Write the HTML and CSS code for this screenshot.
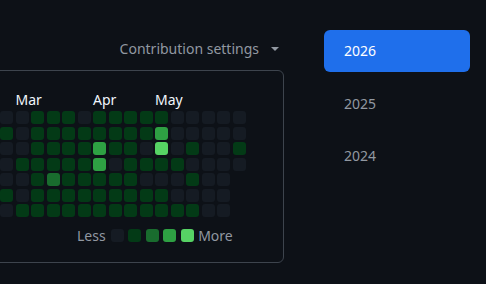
FILE: index.html
```html
<!DOCTYPE html>
<html lang="en">

<head>
  <meta charset="UTF-8">
  <title>Contributions</title>
  <link rel="stylesheet" href="styles.css">
</head>

<body>
  <div id="page">
    <div id="activity">
      <div class="settings">
        <span>Contribution settings</span>
        <span class="caret"></span>
      </div>
      <div id="calendar">
        <div class="months">
          <span style="grid-column: 2">Mar</span>
          <span style="grid-column: 7">Apr</span>
          <span style="grid-column: 11">May</span>
        </div>
        <div class="days" id="days"></div>
        <div class="legend">
          <span>Less</span>
          <span class="day l0"></span>
          <span class="day l1"></span>
          <span class="day l2"></span>
          <span class="day l3"></span>
          <span class="day l4"></span>
          <span>More</span>
        </div>
      </div>
    </div>
    <ul id="years">
      <li class="selected">2026</li>
      <li>2025</li>
      <li>2024</li>
    </ul>
  </div>
  <script>
    // one string per weekday, one char per week; "." = no cell yet
    const weeks = [
      "0011101111100000",
      "1011111111300000",
      "0011113110401001",
      "0111113011110000",
      "001211111000100.",
      "101111111110000.",
      "011111111111100.",
    ];
    const days = document.getElementById("days");
    weeks.forEach((row, r) => {
      row.split("").forEach((lvl, c) => {
        if (lvl === ".") return;
        const d = document.createElement("span");
        d.className = "day l" + lvl;
        d.style.gridRow = r + 1;
        d.style.gridColumn = c + 1;
        days.appendChild(d);
      });
    });
  </script>
</body>

</html>
```

FILE: styles.css
```css
body {
  --background: #0d1117;
  --border: #3d444d;
  --muted: #9198a1;
  --foreground: #f0f6fc;
  --accent: #1f6feb;

  --level0: #151b23;
  --level1: #033a16;
  --level2: #196c2e;
  --level3: #2ea043;
  --level4: #56d364;

  margin: 0;
  overflow: hidden;
  background-color: var(--background);
  color: var(--foreground);
  font-family: "Noto Sans", "Liberation Sans", sans-serif;
  font-size: 14px;
}

#page {
  display: flex;
  gap: 40px;
  margin-left: -17px;
}

#activity {
  width: 301px;
  padding-top: 39px;
}

.settings {
  display: flex;
  justify-content: flex-end;
  align-items: center;
  gap: 12px;
  height: 20px;
  line-height: 20px;
  padding-right: 5px;
  margin-bottom: 11px;
  color: var(--muted);
}

.caret {
  width: 0;
  height: 0;
  border-left: 4px solid transparent;
  border-right: 4px solid transparent;
  border-top: 4px solid var(--muted);
}

#calendar {
  border: 1px solid var(--border);
  border-radius: 6px;
  padding: 19px 0 16px 16px;
}

.months,
.days {
  display: grid;
  grid-template-columns: repeat(16, 13px);
  column-gap: 2.5px;
}

.months {
  height: 20px;
  line-height: 20px;
  margin-bottom: 1px;
}

.months span {
  white-space: nowrap;
}

.days {
  grid-template-rows: repeat(7, 13px);
  row-gap: 2.5px;
}

.day {
  display: block;
  width: 13px;
  height: 13px;
  border-radius: 3px;
}

.l0 { background-color: var(--level0); }
.l1 { background-color: var(--level1); }
.l2 { background-color: var(--level2); }
.l3 { background-color: var(--level3); }
.l4 { background-color: var(--level4); }

.legend {
  display: flex;
  align-items: center;
  gap: 4.5px;
  height: 20px;
  margin-top: 8.5px;
  padding-left: 77px;
  color: var(--muted);
}

.legend span:first-child {
  margin-right: 0.5px;
}

#years {
  list-style: none;
  margin: 30px 0 0;
  padding: 0;
  display: flex;
  flex-direction: column;
  gap: 10.5px;
  width: 146px;
}

#years li {
  height: 42px;
  line-height: 42px;
  padding-left: 20px;
  border-radius: 6px;
  color: var(--muted);
}

#years li.selected {
  background-color: var(--accent);
  color: #ffffff;
}
```
